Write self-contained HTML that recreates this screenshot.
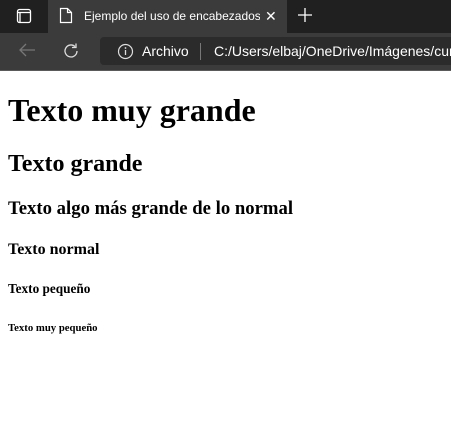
<!DOCTYPE html>
<html><head><meta charset="utf-8"><style>
html,body{margin:0;padding:0;width:451px;height:428px;overflow:hidden;background:#fff}
#chrome{position:absolute;left:0;top:0;width:451px;height:71px;background:#202020;font-family:"Liberation Sans",sans-serif;color:#fff;overflow:hidden}
#tab{position:absolute;left:48px;top:0;width:239px;height:33px;background:#3b3b3b}
#tb{position:absolute;left:0;top:33px;width:451px;height:37px;background:#3b3b3b}
#addr{position:absolute;left:100px;top:37px;width:351px;height:28px;background:#2b2b2b;border-radius:4px 0 0 4px}
#line{position:absolute;left:0;top:70px;width:451px;height:1px;background:#5a5a5a}
.t{position:absolute;font-size:13px;white-space:nowrap}
#content{position:absolute;top:71px;left:0;right:0;bottom:0;font-family:"Liberation Serif",serif;color:#000;overflow:hidden}
#content div{margin:8px}
h1,h2,h3,h4,h5,h6{font-weight:bold;margin-left:0}
h1{font-size:32px;margin:21.44px 0}
h2{font-size:24px;margin:19.92px 0}
h3{font-size:18.72px;margin:18.72px 0}
h4{font-size:16px;margin:21.28px 0}
h5{font-size:13.28px;margin:22.18px 0}
h6{font-size:10.72px;margin:24.97px 0}
</style></head><body>
<div id="chrome">
<svg style="position:absolute;left:16px;top:8px" width="16" height="16"><rect x="1.5" y="1.5" width="13" height="13" rx="2" fill="none" stroke="#fff" stroke-width="1.3"/><line x1="1.5" y1="4.5" x2="14.5" y2="4.5" stroke="#fff" stroke-width="1.3"/><line x1="4" y1="4.5" x2="4" y2="14.5" stroke="#fff" stroke-width="1.3"/></svg>
<div id="tab"></div>
<svg style="position:absolute;left:59px;top:7px" width="14" height="17"><path d="M1.5 1.5h7l4 4v10h-11z M8.5 1.5v4h4" fill="none" stroke="#fff" stroke-width="1.2"/></svg>
<div class="t" style="left:84px;top:9px;width:176px;overflow:hidden;font-size:12px">Ejemplo del uso de encabezados</div>
<div class="t" style="left:265px;top:8px;font-size:14px">✕</div>
<svg style="position:absolute;left:297px;top:7px" width="16" height="16"><path d="M8 1v14M1 8h14" stroke="#fff" stroke-width="1.3"/></svg>
<div id="tb"></div>
<svg style="position:absolute;left:18px;top:42px" width="18" height="16"><path d="M17 8H2M8 2L2 8l6 6" fill="none" stroke="#777" stroke-width="1.3"/></svg>
<svg style="position:absolute;left:63px;top:42px" width="18" height="18"><path d="M14 9a6 6 0 1 1-2-4.5M13 1.5v4h-4" fill="none" stroke="#ddd" stroke-width="1.3"/></svg>
<div id="addr"></div>
<svg style="position:absolute;left:117px;top:43px" width="17" height="17"><circle cx="8.5" cy="8.5" r="7" fill="none" stroke="#ddd" stroke-width="1.2"/><path d="M8.5 7v5" stroke="#ddd" stroke-width="1.3"/><circle cx="8.5" cy="5" r=".9" fill="#ddd"/></svg>
<div class="t" style="left:142px;top:43px;font-size:14px">Archivo</div>
<div style="position:absolute;left:200px;top:43px;width:1px;height:17px;background:#777"></div>
<div class="t" style="left:214px;top:43px;font-size:14px">C:/Users/elbaj/OneDrive/Imágenes/curso</div>
<div id="line"></div>
</div>
<div id="content"><div>
<h1>Texto muy grande</h1>
<h2>Texto grande</h2>
<h3>Texto algo más grande de lo normal</h3>
<h4>Texto normal</h4>
<h5>Texto pequeño</h5>
<h6>Texto muy pequeño</h6>
</div></div>
</body></html>
